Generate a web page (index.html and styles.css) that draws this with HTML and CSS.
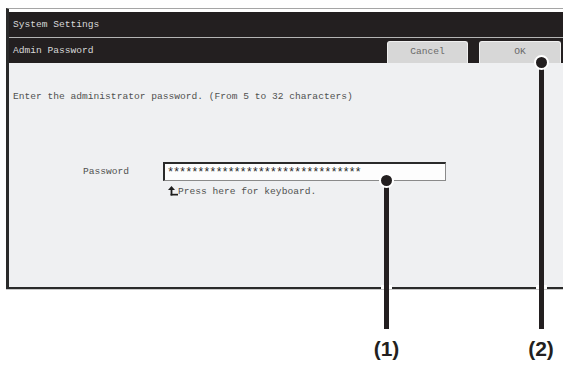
FILE: index.html
```html
<!DOCTYPE html>
<html lang="en">
<head>
  <meta charset="UTF-8" />
  <title>System Settings — Admin Password</title>
  <link rel="stylesheet" href="styles.css">
</head>
<body>
  <div class="screen">
    <div class="titlebar">System Settings</div>
    <div class="subbar">
      <span class="subtitle">Admin Password</span>
      <div class="actions">
        <button class="btn">Cancel</button>
        <button class="btn btn-ok">OK</button>
      </div>
    </div>
    <div class="panel">
      <p class="intro">Enter the administrator password. (From 5 to 32 characters)</p>
      <div class="field">
        <span class="field-label">Password</span>
        <div class="field-input">********************************</div>
      </div>
      <div class="hint">
        <svg class="hint-arrow" width="10" height="10" viewBox="0 0 10 10">
          <polygon points="0,4 3.5,0 7,4" fill="#1e1e1e" />
          <rect x="2.6" y="3" width="1.8" height="6.5" fill="#1e1e1e" />
          <rect x="2.6" y="7.8" width="7.4" height="1.7" fill="#1e1e1e" />
        </svg>
        <span>Press here for keyboard.</span>
      </div>
    </div>
  </div>

  <!-- callouts lie over the screen -->
  <div class="callout callout-1">
    <div class="dot"></div>
    <div class="stem"></div>
    <div class="num">(1)</div>
  </div>
  <div class="callout callout-2">
    <div class="dot"></div>
    <div class="stem"></div>
    <div class="num">(2)</div>
  </div>
</body>
</html>
```

FILE: styles.css
```css
body {
  margin: 0;
  background: #fff;
  font-family: "Liberation Mono", "DejaVu Sans Mono", monospace;
  font-size: 9.6px;
  color: #505050;
  position: relative;
  height: 365px;
  overflow: hidden;
}

.screen {
  margin: 8px 1px 0 6px;
  border-top: 1px solid #a5a5a5;
  border-left: 3px solid #2a2a2a;
  border-bottom: 2px solid #2a2a2a;
  box-shadow: 0 1px 0 #c9c9c9;
  padding-top: 3px;
  background: #fff;
}

.titlebar {
  height: 25px;
  line-height: 25px;
  padding-left: 4px;
  background: #231f20;
  color: #d8d8d8;
  border-bottom: 1px solid #b4b4b4;
}

.subbar {
  height: 25px;
  display: flex;
  justify-content: space-between;
  background: #231f20;
  color: #d8d8d8;
}

.subtitle {
  padding-left: 4px;
  line-height: 25px;
}

.actions {
  display: flex;
  align-items: flex-end;
  gap: 11px;
  padding-right: 2px;
}

.btn {
  width: 81px;
  height: 22px;
  padding: 0 0 2px;
  font-family: inherit;
  font-size: 9.6px;
  color: #6a6a6a;
  background: #d7d7d7;
  border: 1px solid #f0f0f0;
  border-bottom: none;
  border-radius: 3px 3px 0 0;
}

.btn-ok {
  width: 82px;
}

.panel {
  height: 224px;
  box-sizing: border-box;
  padding: 28px 0 0 4px;
  background: #eff0f2;
}

.intro {
  margin: 0;
  line-height: 12px;
}

.field {
  display: flex;
  align-items: center;
  margin-top: 59px;
}

.field-label {
  width: 80px;
  margin-left: 70px;
}

.field-input {
  width: 283px;
  height: 19px;
  box-sizing: border-box;
  padding: 1px 0 0 2px;
  line-height: 16px;
  font-size: 12px;
  letter-spacing: -1.15px;
  color: #2a2a2a;
  background: #fdfdfd;
  border-top: 2px solid #2a2a2a;
  border-left: 2px solid #2a2a2a;
  border-right: 1px solid #8a8a8a;
  border-bottom: 1px solid #8a8a8a;
}

.hint {
  display: flex;
  align-items: center;
  margin: 5px 0 0 155px;
  line-height: 12px;
}

.hint-arrow {
  margin-bottom: 2px;
}

.callout {
  position: absolute;
  display: flex;
  flex-direction: column;
  align-items: center;
  width: 40px;
  margin-left: -20px;
}

.dot {
  width: 11px;
  height: 11px;
  border-radius: 50%;
  background: #231f20;
  border: 2px solid #fff;
  position: relative;
  z-index: 1;
}

.stem {
  position: relative;
  width: 5px;
  margin-top: -8px;
  background: #231f20;
}

.stem::before {
  content: "";
  position: absolute;
  left: 0;
  width: 100%;
  height: 4px;
  background: #231f20;
  box-shadow: 3px 0 0 #fff, -3px 0 0 #fff;
}

.num {
  margin-top: 9px;
  font-family: "Liberation Sans", Arial, sans-serif;
  font-weight: bold;
  font-size: 21px;
  line-height: 22px;
  color: #231f20;
}

.callout-1 {
  left: 386.5px;
  top: 173px;
}

.callout-1 .stem {
  height: 149px;
}

.callout-1 .stem::before {
  top: 105px;
}

.callout-2 {
  left: 541px;
  top: 55px;
}

.callout-2 .stem {
  height: 267px;
}

.callout-2 .stem::before {
  top: 223px;
}
```
